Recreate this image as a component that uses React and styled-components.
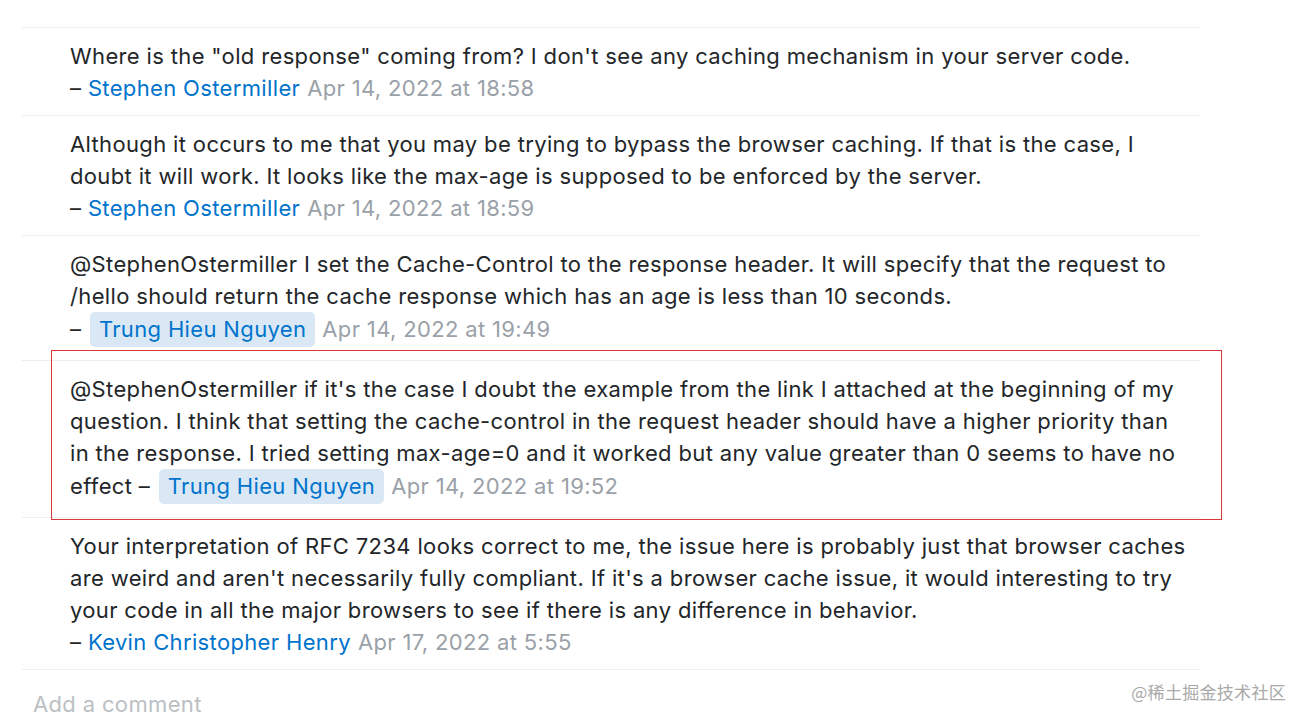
import React from "react";
import styled, { createGlobalStyle } from "styled-components";

const GlobalStyle = createGlobalStyle`
  html, body {
    margin: 0;
    padding: 0;
    background: #fff;
  }
  body {
    font-family: Inter, "Liberation Sans", Arial, sans-serif;
    color: #232629;
  }
`;

const S = {
  Page: styled.div`
    position: relative;
    width: 1306px;
    height: 728px;
    overflow: hidden;
    background: #fff;
  `,
  List: styled.div`
    margin: 27px 0 0 22px;
    width: 1178px;
    border-top: 1px solid #eceef0;
  `,
  Comment: styled.div`
    padding: 12px 10px ${({ $owner }) => ($owner ? "13px" : "11px")} 48px;
    border-bottom: 1px solid #eceef0;
    font-size: 22px;
    line-height: 32px;
    letter-spacing: 0.35px;
    color: #232629;
  `,
  Meta: styled.span`
    white-space: nowrap;
  `,
  User: styled.a`
    color: #0074cc;
    text-decoration: none;
    padding: ${({ $owner }) => ($owner ? "1px 9px 2px" : "0")};
    margin-left: ${({ $owner }) => ($owner ? "2px" : "0")};
    border-radius: 5px;
    background: ${({ $owner }) => ($owner ? "#dae8f5" : "transparent")};
    display: inline-block;
    line-height: 32px;
  `,
  Date: styled.span`
    color: #9aa1a8;
    margin-left: 7px;
  `,
  AddComment: styled.div`
    padding: 19px 0 0 33px;
    font-size: 22px;
    line-height: 30px;
    letter-spacing: 0.35px;
    color: #bbc0c4;
  `,
  Highlight: styled.div`
    position: absolute;
    left: 51px;
    top: 350px;
    width: 1169px;
    height: 168px;
    border: 1px solid #d9383a;
    pointer-events: none;
  `,
  Watermark: styled.div`
    position: absolute;
    right: 20px;
    bottom: 24px;
    font-family: "Noto Sans CJK SC", "Liberation Sans", sans-serif;
    font-size: 17px;
    color: #a9a9a9;
    letter-spacing: 0.3px;
  `,
};

const comments = [
  {
    text: 'Where is the "old response" coming from? I don\'t see any caching mechanism in your server code.',
    user: "Stephen Ostermiller",
    date: "Apr 14, 2022 at 18:58",
    newline: true,
  },
  {
    text: "Although it occurs to me that you may be trying to bypass the browser caching. If that is the case, I doubt it will work. It looks like the max-age is supposed to be enforced by the server.",
    user: "Stephen Ostermiller",
    date: "Apr 14, 2022 at 18:59",
    newline: true,
  },
  {
    text: "@StephenOstermiller I set the Cache-Control to the response header. It will specify that the request to /hello should return the cache response which has an age is less than 10 seconds.",
    user: "Trung Hieu Nguyen",
    date: "Apr 14, 2022 at 19:49",
    owner: true,
    newline: true,
  },
  {
    text: "@StephenOstermiller if it's the case I doubt the example from the link I attached at the beginning of my question. I think that setting the cache-control in the request header should have a higher priority than in the response. I tried setting max-age=0 and it worked but any value greater than 0 seems to have no effect",
    user: "Trung Hieu Nguyen",
    date: "Apr 14, 2022 at 19:52",
    owner: true,
  },
  {
    text: "Your interpretation of RFC 7234 looks correct to me, the issue here is probably just that browser caches are weird and aren't necessarily fully compliant. If it's a browser cache issue, it would interesting to try your code in all the major browsers to see if there is any difference in behavior.",
    user: "Kevin Christopher Henry",
    date: "Apr 17, 2022 at 5:55",
    newline: true,
  },
];

function App() {
  return (
    <S.Page>
      <GlobalStyle />
      <S.List>
        {comments.map((c, index) => (
          <S.Comment key={`comment${index}`} $owner={c.owner}>
            {c.text}
            {c.newline ? <br /> : " "}
            <S.Meta>
              {"– "}
              <S.User $owner={c.owner} href="#">
                {c.user}
              </S.User>
              <S.Date>{c.date}</S.Date>
            </S.Meta>
          </S.Comment>
        ))}
      </S.List>
      <S.AddComment>Add a comment</S.AddComment>
      <S.Highlight />
      <S.Watermark>@稀土掘金技术社区</S.Watermark>
    </S.Page>
  );
}

export default App;
